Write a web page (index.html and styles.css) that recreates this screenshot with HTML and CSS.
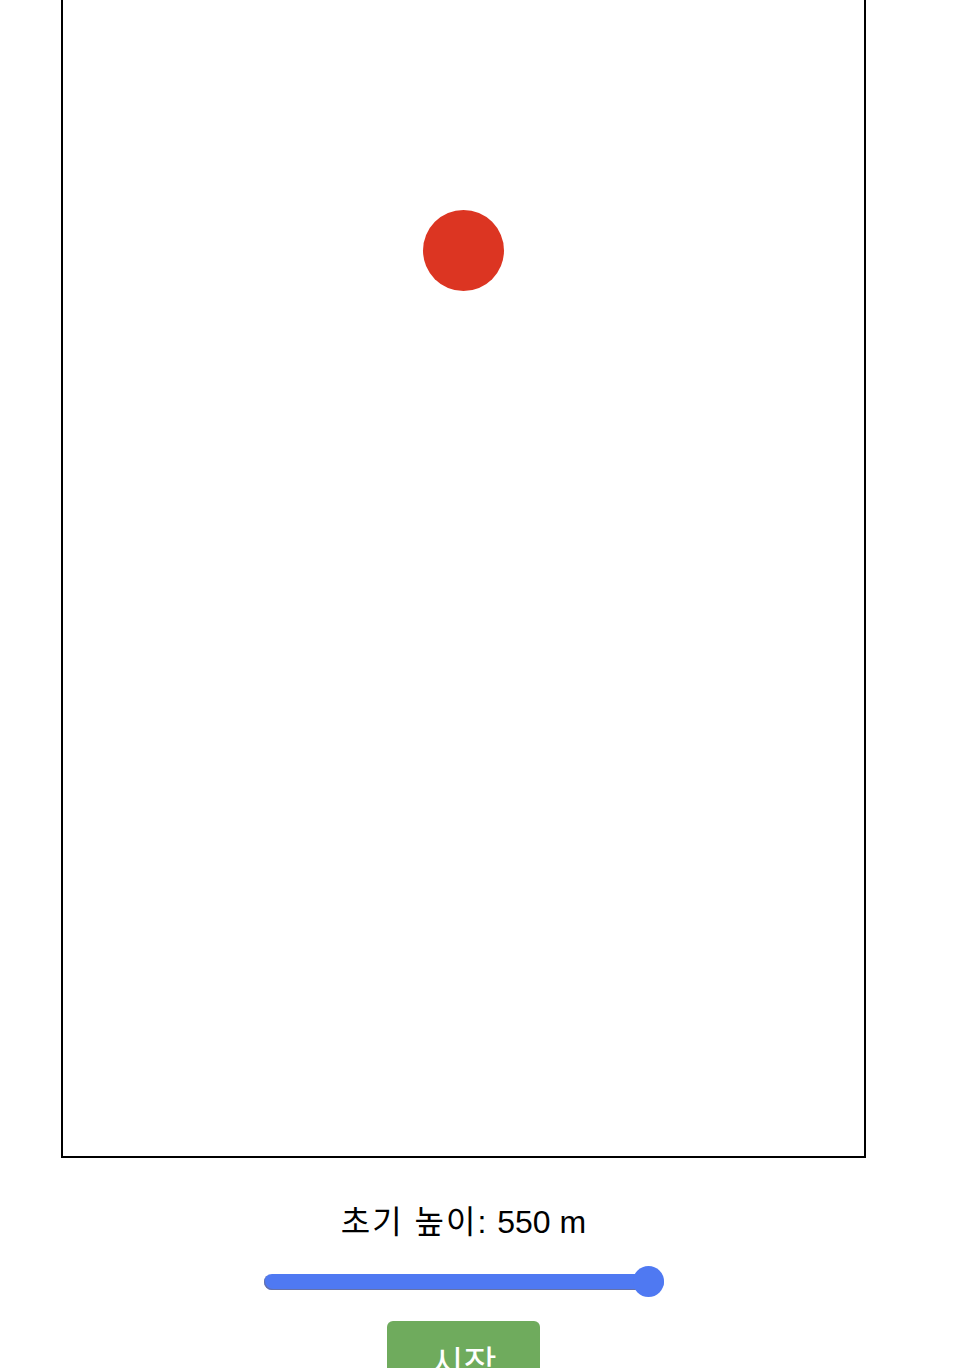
FILE: index.html
```html
<!DOCTYPE html>
<html lang="ko">
<head>
<meta charset="utf-8">
<title>자유 낙하</title>
<link rel="stylesheet" href="styles.css">
</head>
<body>
<div class="page">
  <div class="stage">
    <div class="ball"></div>
  </div>
  <div class="label"><span class="label-ko">초기 높이:</span> 550 m</div>
  <input class="slider" type="range" min="100" max="550" value="550">
  <button class="start">시작</button>
</div>
</body>
</html>
```
FILE: styles.css
```css
html, body {
  margin: 0;
  padding: 0;
  background: #ffffff;
}
body {
  font-family: "Liberation Sans", "Noto Sans CJK KR", sans-serif;
  color: #000000;
}
.page {
  width: 927px;
  display: flex;
  flex-direction: column;
  align-items: center;
}
.stage {
  position: relative;
  width: 801px;
  height: 1156px;
  border: 2px solid #000000;
  border-top: none;
}
.ball {
  position: absolute;
  left: 360px;
  top: 210px;
  width: 81px;
  height: 81px;
  border-radius: 50%;
  background: #dc3522;
}
.label {
  margin-top: 40px;
  font-size: 32px;
  line-height: 48px;
}
.label-ko {
  letter-spacing: 2px;
}
.slider {
  -webkit-appearance: none;
  appearance: none;
  margin: 20px 0 0 0;
  width: 400px;
  height: 31px;
  background: transparent;
}
.slider::-webkit-slider-runnable-track {
  height: 16px;
  border-radius: 8px;
  background: #4f79f2;
  box-shadow: inset 1px -1px 0 #6672a8;
}
.slider::-webkit-slider-thumb {
  -webkit-appearance: none;
  appearance: none;
  width: 31px;
  height: 31px;
  border-radius: 50%;
  background: #4f79f2;
  margin-top: -7.5px;
}
.start {
  margin-top: 24px;
  width: 153px;
  padding: 16px 0;
  border: none;
  border-radius: 6px;
  background: #6fab5d;
  color: #ffffff;
  font-family: "Noto Sans CJK KR", sans-serif;
  font-size: 36px;
  line-height: 48px;
}
```
